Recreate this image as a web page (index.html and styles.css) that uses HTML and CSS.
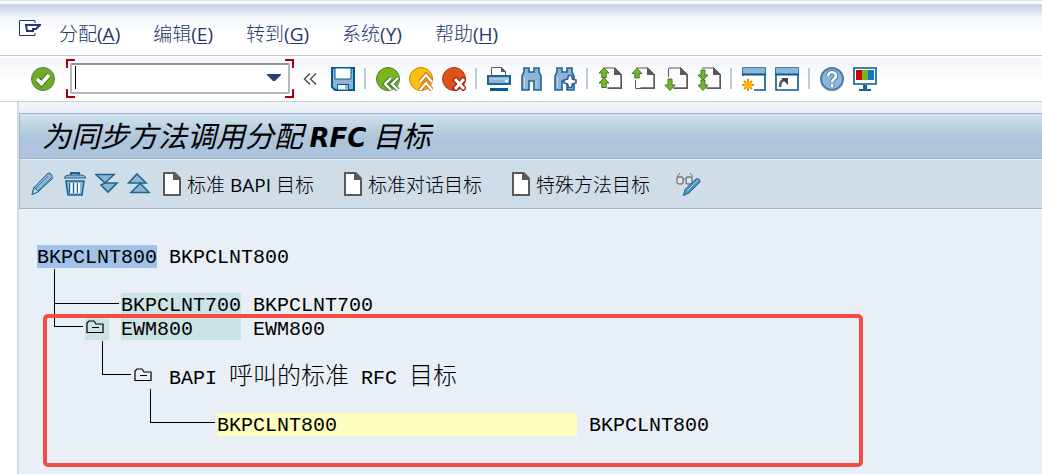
FILE: index.html
```
<!DOCTYPE html>
<html lang="zh-CN">
<head>
    <meta charset="utf-8">
    <meta name="viewport" content="width=device-width">
    <title>为同步方法调用分配 RFC 目标</title>
    <link rel="stylesheet" href="styles.css">
</head>
<body>
    <!-- shapes used more than once -->
    <svg class="defs" width="0" height="0">
        <symbol id="page" viewBox="0 0 18 24">
            <path d="M1 1h10l6 6v16H1z" fill="#fff" stroke="#5a5a5a" stroke-width="2"/>
            <path d="M10 0h2l6 6v2h-8z" fill="#5a5a5a"/>
        </symbol>
        <symbol id="sheet" viewBox="0 0 24 24">
            <path d="M5 1h12l6 6v14H9" fill="none" stroke="#5a5a5a"/>
            <path d="M16 0l8 8h-8z" fill="#5a5a5a"/>
            <path d="M23.300 7v14.300H10" fill="none" stroke="#5a5a5a" stroke-width="1.400"/>
        </symbol>
        <symbol id="up" viewBox="0 0 12 12">
            <path d="M6 .8l5 5.200H8.200v4.500H3.800V6H1z" fill="#7ab51d" stroke="#3d7a35"/>
        </symbol>
        <symbol id="glass" viewBox="0 0 24 24">
            <path d="M4 1h5v4h5V1h5v4l2 4v14h-7v-9H9v9H2V9l2-4z" fill="#8fb4d5" stroke="#1c6592" stroke-width="1.600"/>
            <path d="M4.500 10v11M16 14v7" stroke="#c0d8ec" stroke-width="1"/>
        </symbol>
        <symbol id="folder" viewBox="0 0 18 14">
            <path d="M1 12.500V3l2-2h5l2 3h7v8.500zM6 7.500h7" fill="none" stroke="#000" stroke-width="1.200"/>
        </symbol>
    </svg>

    <nav class="menubar">
        <button type="button" class="icon system" aria-label="Menu">
            <svg width="22" height="17" viewBox="0 0 22 17"><path d="M16 3V.5H.5v15H16V13" fill="none" stroke="#24386a"/><path d="M7 5h14l-4 4h-3v2H8z" fill="#fff" stroke="#24386a" stroke-width="2"/></svg>
        </button>
        <a href="#">分配(<u>A</u>)</a>
        <a href="#">编辑(<u>E</u>)</a>
        <a href="#">转到(<u>G</u>)</a>
        <a href="#">系统(<u>Y</u>)</a>
        <a href="#">帮助(<u>H</u>)</a>
    </nav>

    <div class="toolbar">
        <button type="button" class="icon" aria-label="Enter">
            <svg width="24" height="24"><circle cx="12" cy="12" r="11.500" fill="#72ad21" stroke="#4d8554"/><path d="M6.500 12l4 4.500L18 8" fill="none" stroke="#3c7a2e" stroke-width="6"/><path d="M6 12l4.500 4.500L18 8" fill="none" stroke="#fff" stroke-width="3.600"/></svg>
        </button>
        <div class="command">
            <input type="text" aria-label="Command">
            <span class="caret"></span>
            <button type="button" class="icon drop" aria-label="History">
                <svg width="14" height="8"><path d="M0 1h14v1l-6 6H6L0 2z" fill="#2b4170"/></svg>
            </button>
        </div>
        <button type="button" class="icon collapse" aria-label="Collapse">
            <svg width="14" height="12"><path d="M7 .5L1.500 6 7 11.500M13 .5L7.500 6l5.500 5.500" fill="none" stroke="#555" stroke-width="1.500"/></svg>
        </button>
        <button type="button" class="icon" aria-label="Save">
            <svg width="24" height="24"><path d="M1 1h22v22H4l-3-3z" fill="#8fb4d5" stroke="#005d92" stroke-width="2"/><path d="M4 1h16v11H4z" fill="#fff" stroke="#005d92"/><path d="M6.500 17.500h11V23h-11z" fill="#fff" stroke="#005d92"/><path d="M14 18h3v5h-3z" fill="#8fb4d5"/></svg>
        </button>
        <span class="sep"></span>
        <button type="button" class="icon" aria-label="Back">
            <svg width="24" height="24"><circle cx="12" cy="12" r="11.500" fill="#7ab51d" stroke="#47803e"/><path d="M15 11l-6 6 6 6M22 11l-6 6 6 6" fill="none" stroke="#3d7a35" stroke-width="4.500"/><path d="M15 11l-6 6 6 6M22 11l-6 6 6 6" fill="none" stroke="#fff" stroke-width="2.400"/></svg>
        </button>
        <button type="button" class="icon" aria-label="Exit">
            <svg width="24" height="24"><circle cx="12" cy="12" r="11.500" fill="#fdc010" stroke="#d17812"/><path d="M11 15l6-7 6 7M11 23l6-7 6 7" fill="none" stroke="#d06a10" stroke-width="4.500"/><path d="M11 15l6-7 6 7M11 23l6-7 6 7" fill="none" stroke="#fff" stroke-width="2.400"/></svg>
        </button>
        <button type="button" class="icon" aria-label="Cancel">
            <svg width="24" height="24"><circle cx="12" cy="12" r="11.500" fill="#d9541a" stroke="#b5381a"/><path d="M12 11l11 12M23 11L12 23" stroke="#a82010" stroke-width="5.500"/><path d="M13 12l9 10M22 12l-9 10" stroke="#fff" stroke-width="3"/></svg>
        </button>
        <span class="sep"></span>
        <button type="button" class="icon" aria-label="Print">
            <svg width="24" height="24"><path d="M4.500 9V.5h10l4 4V9" fill="#fff" stroke="#5a5a5a"/><path d="M14 0l5 5h-5z" fill="#5a5a5a"/><path d="M1 9h22v8H1z" fill="#8fb4d5" stroke="#1c6592" stroke-width="2"/><path d="M2 12h20" stroke="#c0d8ec"/><path d="M18 13h3v2h-3z" fill="#fff"/><path d="M3 21h18v3H3z" fill="#005d92"/></svg>
        </button>
        <button type="button" class="icon" aria-label="Find">
            <svg width="24" height="24"><use href="#glass"/></svg>
        </button>
        <button type="button" class="icon" aria-label="Find next">
            <svg width="24" height="24"><use href="#glass"/><path d="M15.500 8.500h3l1 3.500 3.500 1v3l-3.500 1-1 3.500h-3l-1-3.500-3.500-1v-3l3.500-1z" fill="#fff" stroke="#3257a0" stroke-width="1.600"/></svg>
        </button>
        <span class="sep"></span>
        <button type="button" class="icon" aria-label="First page">
            <svg width="24" height="24"><use href="#sheet"/><use href="#up" width="12" height="12"/><use href="#up" y="10" width="12" height="12"/></svg>
        </button>
        <button type="button" class="icon" aria-label="Previous page">
            <svg width="24" height="24"><path d="M4.500 13v8.500H10" fill="none" stroke="#5a5a5a"/><use href="#sheet"/><use href="#up" width="12" height="13"/></svg>
        </button>
        <button type="button" class="icon" aria-label="Next page">
            <svg width="24" height="24"><path d="M4.500 10V1" fill="none" stroke="#5a5a5a"/><use href="#sheet"/><path d="M6 23.500L.8 18H4v-6h4v6h3.200z" fill="#7ab51d" stroke="#3d7a35"/></svg>
        </button>
        <button type="button" class="icon" aria-label="Last page">
            <svg width="24" height="24"><use href="#sheet"/><path d="M6 13L1 8h3V3h4v5h3zM6 23.500L1 18h3v-5h4v5h3z" fill="#7ab51d" stroke="#3d7a35"/></svg>
        </button>
        <span class="sep"></span>
        <button type="button" class="icon" aria-label="New session">
            <svg width="24" height="24"><path d="M1 9V1h22v22H12" fill="#fff" stroke="#005d92" stroke-width="1.600"/><path d="M1 1h22v6H1z" fill="#8fb4d5"/><path d="M0 7.500h24" stroke="#005d92" stroke-width="2"/><path d="M0 18h12M6 12v12M2 14l8 8M10 14l-8 8" stroke="#f08c00" stroke-width="2"/><circle cx="6" cy="18" r="3.500" fill="#fdb913"/></svg>
        </button>
        <button type="button" class="icon" aria-label="Shortcut">
            <svg width="24" height="24"><path d="M1 1h22v22H1z" fill="#fff" stroke="#005d92" stroke-width="1.600"/><path d="M1 1h22v6H1z" fill="#8fb4d5"/><path d="M0 7.500h24" stroke="#005d92" stroke-width="2"/><path d="M5 20c0-5 2-7 5-7" fill="none" stroke="#555" stroke-width="2.500"/><path d="M6 11h7v7z" fill="#444"/></svg>
        </button>
        <span class="sep"></span>
        <button type="button" class="icon" aria-label="Help">
            <svg width="24" height="24"><circle cx="12" cy="12" r="11" fill="#8fb4d5" stroke="#4d7fa8" stroke-width="2"/><path d="M8 9c0-5 8-5 8 0 0 3-4 3-4 6M12 17v3" fill="none" stroke="#4d7fa8" stroke-width="4.500"/><path d="M8 9c0-5 8-5 8 0 0 3-4 3-4 6M12 17v3" fill="none" stroke="#fff" stroke-width="2.600"/></svg>
        </button>
        <button type="button" class="icon" aria-label="Customize layout">
            <svg width="24" height="24"><path d="M1 1h22v16H1z" fill="#fff" stroke="#005d92" stroke-width="1.600"/><path d="M3 3h6v10H3z" fill="#c00"/><path d="M9 3h6v10H9z" fill="#7ab51d"/><path d="M15 3h6v10h-6z" fill="#0a7bc4"/><path d="M10 18h4v4h4v2H6v-2h4z" fill="#1c6592"/></svg>
        </button>
    </div>

    <main class="screen">
        <h1 class="title">为同步方法调用分配 <b>RFC</b> 目标</h1>

        <div class="actions">
            <button type="button" class="icon" aria-label="Change">
                <svg width="24" height="24"><path d="M1 22.500l2-7L16 2q2-2 4 0t1 5L8 19z" fill="#8fb4d5" stroke="#1c6592"/><path d="M4 17L17 4M7 19L20 6" stroke="#3f7dab" stroke-width="1"/><path d="M1 22.500l2-7 5 4z" fill="#b9d3e8" stroke="#1c6592"/></svg>
            </button>
            <button type="button" class="icon" aria-label="Delete">
                <svg width="24" height="24"><path d="M8 3V1h8v2" fill="none" stroke="#1c6592" stroke-width="2"/><path d="M1 6q1-3 5-3h12q4 0 5 3z" fill="#8fb4d5" stroke="#1c6592"/><path d="M3 9h18l-2 14H5z" fill="#8fb4d5" stroke="#1c6592" stroke-width="1.600"/><path d="M8.500 11v10M12.500 11v10M16 11v10" stroke="#fff" stroke-width="2"/><path d="M6.500 11v10M14.500 11v10M10.500 11v10" stroke="#1c6592"/></svg>
            </button>
            <button type="button" class="icon" aria-label="Expand">
                <svg width="24" height="24"><path d="M1 2.500h18l-9 8.500zM6 13l4-2h12L13 20z" fill="#8fb4d5" stroke="#1c6592" stroke-width="1.600"/></svg>
            </button>
            <button type="button" class="icon" aria-label="Collapse">
                <svg width="24" height="24"><path d="M10 2l9 9H1.500zM13 11l9 9.500H4l8-8z" fill="#8fb4d5" stroke="#1c6592" stroke-width="1.600"/></svg>
            </button>
            <button type="button" class="create">
                <svg width="18" height="24"><use href="#page"/></svg>标准 BAPI 目标
            </button>
            <button type="button" class="create">
                <svg width="18" height="24"><use href="#page"/></svg>标准对话目标
            </button>
            <button type="button" class="create">
                <svg width="18" height="24"><use href="#page"/></svg>特殊方法目标
            </button>
            <button type="button" class="icon" aria-label="Display / change">
                <svg width="25" height="24"><path d="M1 5l3-4M17 5l-3-4M7.500 7h2.500" fill="none" stroke="#777"/><rect x="1" y="5" width="6" height="7" rx="2" fill="#dde6ec" stroke="#777" stroke-width="1.300"/><rect x="10" y="5" width="6" height="7" rx="2" fill="#dde6ec" stroke="#777" stroke-width="1.300"/><path d="M7.500 23.500l1.500-6L20 7q4-1 4 3L13 21z" fill="#4d93c0" stroke="#1c6592"/><path d="M11 19L22 8" stroke="#a9cbe4"/></svg>
            </button>
        </div>

        <div class="tree">
            <div class="row">
                <span class="node root">BKPCLNT800</span>
                <span>BKPCLNT800</span>
            </div>
            <div class="row level1"><span class="line down"></span></div>
            <div class="row level1">
                <span class="line down wide"></span>
                <span class="node system-node">BKPCLNT700</span>
                <span>BKPCLNT700</span>
            </div>
            <div class="row level1">
                <span class="line elbow"></span>
                <span class="fold open"><svg width="18" height="14"><use href="#folder"/></svg></span>
                <span class="node system-node">EWM800</span>
                <span>EWM800</span>
            </div>
            <div class="row level2"><span class="line down"></span></div>
            <div class="row level2">
                <span class="line elbow"></span>
                <span class="fold"><svg width="18" height="14"><use href="#folder"/></svg></span>
                <span class="text">BAPI <span class="cjk">呼叫的标准</span> RFC <span class="cjk">目标</span></span>
            </div>
            <div class="row level3"><span class="line down"></span></div>
            <div class="row level3">
                <span class="line elbow wide"></span>
                <span class="node target">BKPCLNT800</span>
                <span>BKPCLNT800</span>
            </div>
            <div class="highlight"></div>
        </div>
    </main>
</body>
</html>
```
FILE: styles.css
```
* {
    box-sizing: border-box;
}

body {
    display: flex;
    flex-direction: column;
    min-height: 100vh;
    margin: 0;
    font-family: "Open Sans", "Noto Sans CJK SC Light", "Noto Sans CJK SC", sans-serif;
    font-size: 19px;
    color: #000;
    background-color: #fff;
}

button {
    font: inherit;
    color: inherit;
    background: none;
    border: none;
    padding: 0;
    cursor: pointer;
}

svg {
    display: block;
    flex: none;
}

.defs {
    position: absolute;
}

.icon {
    display: flex;
    flex: none;
}

/* Menu bar */
.menubar {
    display: flex;
    align-items: center;
    gap: 33px;
    height: 56px;
    padding: 12px 19px 0;
    border-top: 1px solid #d9e4f3;
    border-bottom: 1px solid #c5cad6;
    background: linear-gradient(#fff 0, #fff 3px, #c9d6e7 3px, #d5dfec 8px, #f4f7fa 17px, #fff 32px);
}

.menubar a {
    color: #24386a;
    text-decoration: none;
    line-height: 24px;
}

.menubar u {
    text-underline-offset: 2px;
}

.system {
    margin-right: -15px;
    padding-bottom: 12px;
}

/* Standard toolbar */
.toolbar {
    display: flex;
    align-items: center;
    gap: 9px;
    height: 46px;
    padding-left: 31px;
    border-bottom: 1px solid #ccd0da;
    background: linear-gradient(#fff 2px, #f3f5fa 2px, #fff 26px);
}

.sep {
    width: 3px;
    height: 21px;
    border-left: 2px solid #b8cde0;
}

/* Command field with red focus corners */
.command {
    position: relative;
    width: 228px;
    height: 39px;
    margin-left: 2px;
    padding: 4px;
    background:
        linear-gradient(#a80008, #a80008) 0 0 / 9px 2px,
        linear-gradient(#a80008, #a80008) 0 0 / 2px 9px,
        linear-gradient(#a80008, #a80008) 100% 0 / 9px 2px,
        linear-gradient(#a80008, #a80008) 100% 0 / 2px 9px,
        linear-gradient(#a80008, #a80008) 0 100% / 9px 2px,
        linear-gradient(#a80008, #a80008) 0 100% / 2px 9px,
        linear-gradient(#a80008, #a80008) 100% 100% / 9px 2px,
        linear-gradient(#a80008, #a80008) 100% 100% / 2px 9px;
    background-repeat: no-repeat;
}

.command input {
    display: block;
    width: 100%;
    height: 31px;
    padding: 0 28px 0 4px;
    font: inherit;
    border: 2px solid #b4b8c0;
    border-top-color: #90949c;
    border-radius: 2px;
    outline: none;
}

.caret {
    position: absolute;
    left: 9px;
    top: 7px;
    width: 1px;
    height: 23px;
    background-color: #000;
}

.drop {
    position: absolute;
    right: 13px;
    top: 14px;
}

.collapse {
    margin-right: 5px;
}

/* Screen area */
.screen {
    flex: 1;
    margin-left: 17px;
    border-left: 2px solid #d5dce9;
    padding-top: 11px;
    background: linear-gradient(#f4f6fb, #e8edf7 11px, #e8eff7 12px);
}

.title {
    height: 46px;
    margin: 0;
    padding-left: 22px;
    font-size: 29px;
    font-weight: 400;
    font-family: "Noto Sans CJK SC", sans-serif;
    font-style: italic;
    line-height: 40px;
    border: 1px solid #a6b4cb;
    border-right: none;
    background: linear-gradient(#d2e3ef, #b5ccdc 18px, #adc4dc 26px, #adc4dc);
}

.title b {
    font-family: "DejaVu Sans", sans-serif;
    font-size: 26px;
}

.actions {
    display: flex;
    align-items: center;
    gap: 8px;
    height: 50px;
    padding-left: 11px;
    border: 1px solid #a6b4cb;
    border-right: none;
    border-top-color: #e0eaf2;
    background-color: #cfdde8;
}

.create {
    display: flex;
    align-items: center;
    gap: 6px;
    margin-left: 4px;
    margin-right: 18px;
    white-space: nowrap;
}

/* Assignment tree, 12px per character and 24px per line */
.tree {
    position: relative;
    padding: 36px 18px;
    font-family: "Liberation Mono", "Noto Sans CJK SC", monospace;
    font-size: 20px;
}

.row {
    display: flex;
    height: 24px;
    line-height: 26px;
    white-space: pre;
}

.level1 {
    padding-left: 17px;
}

.level2 {
    padding-left: 65px;
}

.level3 {
    padding-left: 113px;
}

.node {
    width: 120px;
    height: 23px;
    margin-right: 12px;
}

.root {
    background-color: #a2c2ea;
}

.system-node {
    background-color: #cbe3e5;
}

.target {
    width: 360px;
    background-color: #fffdbf;
}

.line {
    width: 29px;
    margin-right: 2px;
    border-left: 1px solid #000;
}

.wide {
    width: 65px;
}

.elbow {
    height: 10px;
    border-bottom: 1px solid #000;
}

.down.wide::before {
    content: "";
    display: block;
    height: 10px;
    border-bottom: 1px solid #000;
}

.fold {
    width: 24px;
    height: 23px;
    margin-right: 12px;
    padding: 3px 0 0 1px;
}

.open {
    background-color: #cbe3e5;
}

.cjk {
    font-size: 24px;
    font-weight: 300;
}

.highlight {
    position: absolute;
    left: 24px;
    top: 105px;
    width: 820px;
    height: 153px;
    border: 4px solid #f44c40;
    border-radius: 5px;
}
```
